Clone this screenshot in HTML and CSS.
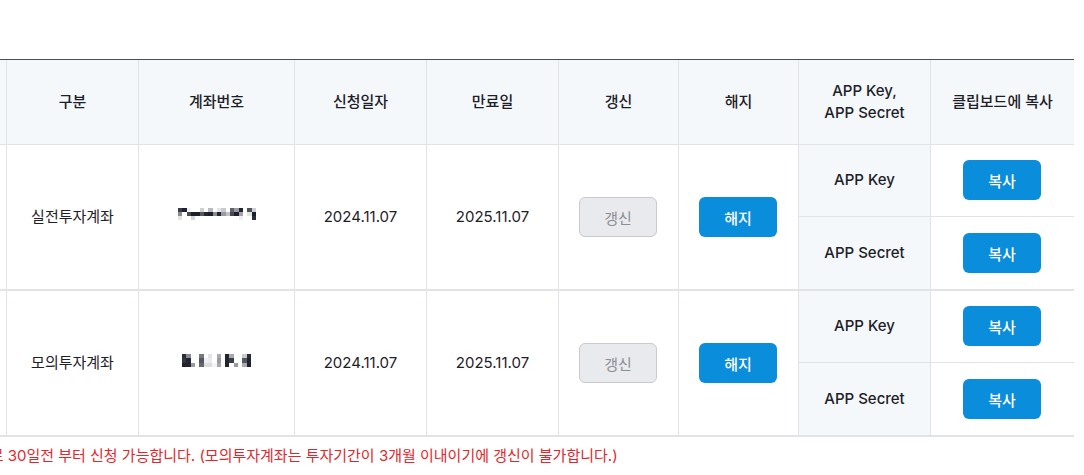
FILE: index.html
```html
<!DOCTYPE html>
<html lang="ko">
<head>
<meta charset="utf-8">
<title>API 신청 계좌</title>
<link rel="stylesheet" href="styles.css">
</head>
<body>
<div class="page">
  <div class="scroll">
    <div class="grid" role="table">
      <div class="cell head first" role="columnheader"></div>
      <div class="cell head" role="columnheader">구분</div>
      <div class="cell head" role="columnheader">계좌번호</div>
      <div class="cell head" role="columnheader">신청일자</div>
      <div class="cell head" role="columnheader">만료일</div>
      <div class="cell head" role="columnheader">갱신</div>
      <div class="cell head" role="columnheader">해지</div>
      <div class="cell head" role="columnheader">APP Key,<br>APP Secret</div>
      <div class="cell head last" role="columnheader">클립보드에 복사</div>

      <div class="cell span first"></div>
      <div class="cell span">실전투자계좌</div>
      <div class="cell span">
        <svg class="mosaic m1" viewBox="0 0 18 3" preserveAspectRatio="none" shape-rendering="crispEdges" aria-label="계좌번호 가림">
          <rect x="0" y="0" width="1" height="1" fill="#3a3c46"/><rect x="1" y="0" width="1" height="1" fill="#1f2130"/><rect x="2" y="0" width="1" height="1" fill="#f2f2f4"/><rect x="5" y="0" width="1" height="1" fill="#cfd0d4"/><rect x="7" y="0" width="1" height="1" fill="#b9bac0"/><rect x="9" y="0" width="1" height="1" fill="#e4e4e7"/><rect x="10" y="0" width="1" height="1" fill="#c9cacf"/><rect x="12" y="0" width="1" height="1" fill="#5e606a"/><rect x="13" y="0" width="1" height="1" fill="#9a9ba2"/><rect x="14" y="0" width="1" height="1" fill="#23252f"/><rect x="16" y="0" width="1" height="1" fill="#4e505a"/><rect x="17" y="0" width="1" height="1" fill="#cfd0d4"/>
          <rect x="0" y="1" width="1" height="1" fill="#8a8b92"/><rect x="2" y="1" width="1" height="1" fill="#474952"/><rect x="3" y="1" width="1" height="1" fill="#1c1e2b"/><rect x="4" y="1" width="1" height="1" fill="#1c1e2b"/><rect x="5" y="1" width="1" height="1" fill="#55575f"/><rect x="6" y="1" width="1" height="1" fill="#23252f"/><rect x="7" y="1" width="1" height="1" fill="#1c1e2b"/><rect x="8" y="1" width="1" height="1" fill="#8a8b92"/><rect x="9" y="1" width="1" height="1" fill="#23252f"/><rect x="10" y="1" width="1" height="1" fill="#9a9ba2"/><rect x="11" y="1" width="1" height="1" fill="#c2c3c8"/><rect x="12" y="1" width="1" height="1" fill="#474952"/><rect x="13" y="1" width="1" height="1" fill="#1f2130"/><rect x="14" y="1" width="1" height="1" fill="#a3a4aa"/><rect x="16" y="1" width="1" height="1" fill="#e4e4e7"/><rect x="17" y="1" width="1" height="1" fill="#1c1e2b"/>
          <rect x="0" y="2" width="1" height="1" fill="#e4e4e7"/><rect x="3" y="2" width="1" height="1" fill="#d6d7db"/><rect x="14" y="2" width="1" height="1" fill="#efeff2"/><rect x="17" y="2" width="1" height="1" fill="#2c2e39"/>
        </svg>
      </div>
      <div class="cell span">2024.11.07</div>
      <div class="cell span">2025.11.07</div>
      <div class="cell span"><button class="btn disabled" type="button" disabled>갱신</button></div>
      <div class="cell span"><button class="btn primary" type="button">해지</button></div>
      <div class="cell key">APP Key</div>
      <div class="cell copy last"><button class="btn primary" type="button">복사</button></div>
      <div class="cell key end">APP Secret</div>
      <div class="cell copy last end"><button class="btn primary" type="button">복사</button></div>

      <div class="cell span first"></div>
      <div class="cell span">모의투자계좌</div>
      <div class="cell span">
        <svg class="mosaic m2" viewBox="0 0 16 3" preserveAspectRatio="none" shape-rendering="crispEdges" aria-label="계좌번호 가림">
          <rect x="0" y="0" width="1" height="1" fill="#2a2c38"/><rect x="1" y="0" width="1" height="1" fill="#8a8b92"/><rect x="4" y="0" width="1" height="1" fill="#76787f"/><rect x="6" y="0" width="1" height="1" fill="#e2e3e5"/><rect x="8" y="0" width="1" height="1" fill="#a9aaaf"/><rect x="10" y="0" width="1" height="1" fill="#22242f"/><rect x="11" y="0" width="1" height="1" fill="#a9aaaf"/><rect x="14" y="0" width="1" height="1" fill="#c9cacd"/><rect x="15" y="0" width="1" height="1" fill="#2a2c38"/>
          <rect x="0" y="1" width="1" height="1" fill="#34363f"/><rect x="1" y="1" width="1" height="1" fill="#22242f"/><rect x="4" y="1" width="1" height="1" fill="#56585f"/><rect x="5" y="1" width="1" height="1" fill="#f0f0f2"/><rect x="6" y="1" width="1" height="1" fill="#ebebed"/><rect x="8" y="1" width="1" height="1" fill="#9a9ba1"/><rect x="10" y="1" width="1" height="1" fill="#22242f"/><rect x="11" y="1" width="1" height="1" fill="#3a3c46"/><rect x="14" y="1" width="1" height="1" fill="#56585f"/><rect x="15" y="1" width="1" height="1" fill="#22242f"/>
          <rect x="0" y="2" width="1" height="1" fill="#1f2130"/><rect x="1" y="2" width="1" height="1" fill="#22242f"/><rect x="2" y="2" width="1" height="1" fill="#9a9ba1"/><rect x="4" y="2" width="1" height="1" fill="#66686f"/><rect x="5" y="2" width="1" height="1" fill="#dcdde0"/><rect x="6" y="2" width="1" height="1" fill="#dcdde0"/><rect x="7" y="2" width="1" height="1" fill="#f4f4f6"/><rect x="8" y="2" width="1" height="1" fill="#a9aaaf"/><rect x="10" y="2" width="1" height="1" fill="#22242f"/><rect x="12" y="2" width="1" height="1" fill="#9a9ba1"/><rect x="14" y="2" width="1" height="1" fill="#a9aaaf"/><rect x="15" y="2" width="1" height="1" fill="#1f2130"/>
        </svg>
      </div>
      <div class="cell span">2024.11.07</div>
      <div class="cell span">2025.11.07</div>
      <div class="cell span"><button class="btn disabled" type="button" disabled>갱신</button></div>
      <div class="cell span"><button class="btn primary" type="button">해지</button></div>
      <div class="cell key">APP Key</div>
      <div class="cell copy last"><button class="btn primary" type="button">복사</button></div>
      <div class="cell key end">APP Secret</div>
      <div class="cell copy last end"><button class="btn primary" type="button">복사</button></div>
    </div>
    <p class="note">갱신은 만료일 기준으로 30일전 부터 신청 가능합니다. (모의투자계좌는 투자기간이 3개월 이내이기에 갱신이 불가합니다.)</p>
  </div>
</div>
</body>
</html>
```

FILE: styles.css
```css
html, body {
  margin: 0;
  padding: 0;
  background: #ffffff;
}

body {
  font-family: Inter, "Noto Sans CJK KR", sans-serif;
  font-size: 15px;
  color: #1e2028;
  overflow: hidden;
}

.page {
  width: 1084px;
  padding-top: 59px;
  box-sizing: border-box;
  padding-right: 10px;
}

.scroll {
  margin-left: -153px;
}

.grid {
  display: grid;
  grid-template-columns: 160px 132px 156px 132px 132px 120px 120px 132px 143px;
  grid-template-rows: 85px 72px 74px 72px 74px;
  border-top: 1px solid #4b4e56;
}

.cell {
  box-sizing: border-box;
  display: flex;
  align-items: center;
  justify-content: center;
  text-align: center;
  border-right: 1px solid #e1e3e7;
  border-bottom: 1px solid #e1e3e7;
  line-height: 22px;
}

.cell.last {
  border-right: none;
}

.head {
  background: #f4f8fb;
  font-weight: 500;
}

.span {
  grid-row: span 2;
  border-bottom-width: 2px;
}

.end {
  border-bottom-width: 2px;
}

.key {
  background: #f4f8fb;
  font-weight: 500;
  padding-bottom: 2px;
}

.key.end {
  padding-bottom: 0;
}

.mosaic {
  display: block;
  margin-bottom: 7px;
}

.m1 {
  width: 78px;
  height: 12px;
}

.m2 {
  width: 69px;
  height: 13px;
  margin-bottom: 5px;
}

.btn {
  box-sizing: border-box;
  width: 78px;
  height: 40px;
  margin-right: 1px;
  border-radius: 6px;
  font-family: Inter, "Noto Sans CJK KR", sans-serif;
  font-size: 15px;
  font-weight: 500;
  padding: 0;
  cursor: pointer;
}

.copy:not(.end) .btn {
  margin-bottom: 1px;
}

.primary {
  background: #0a8ddb;
  border: none;
  color: #ffffff;
}

.disabled {
  background: #e9eaed;
  border: 1px solid #c8cacf;
  color: #8b8e94;
  font-weight: 400;
  cursor: default;
}

.note {
  margin: 8px 0 0;
  padding-left: 10px;
  line-height: 22px;
  color: #e3262c;
  white-space: nowrap;
}
```
